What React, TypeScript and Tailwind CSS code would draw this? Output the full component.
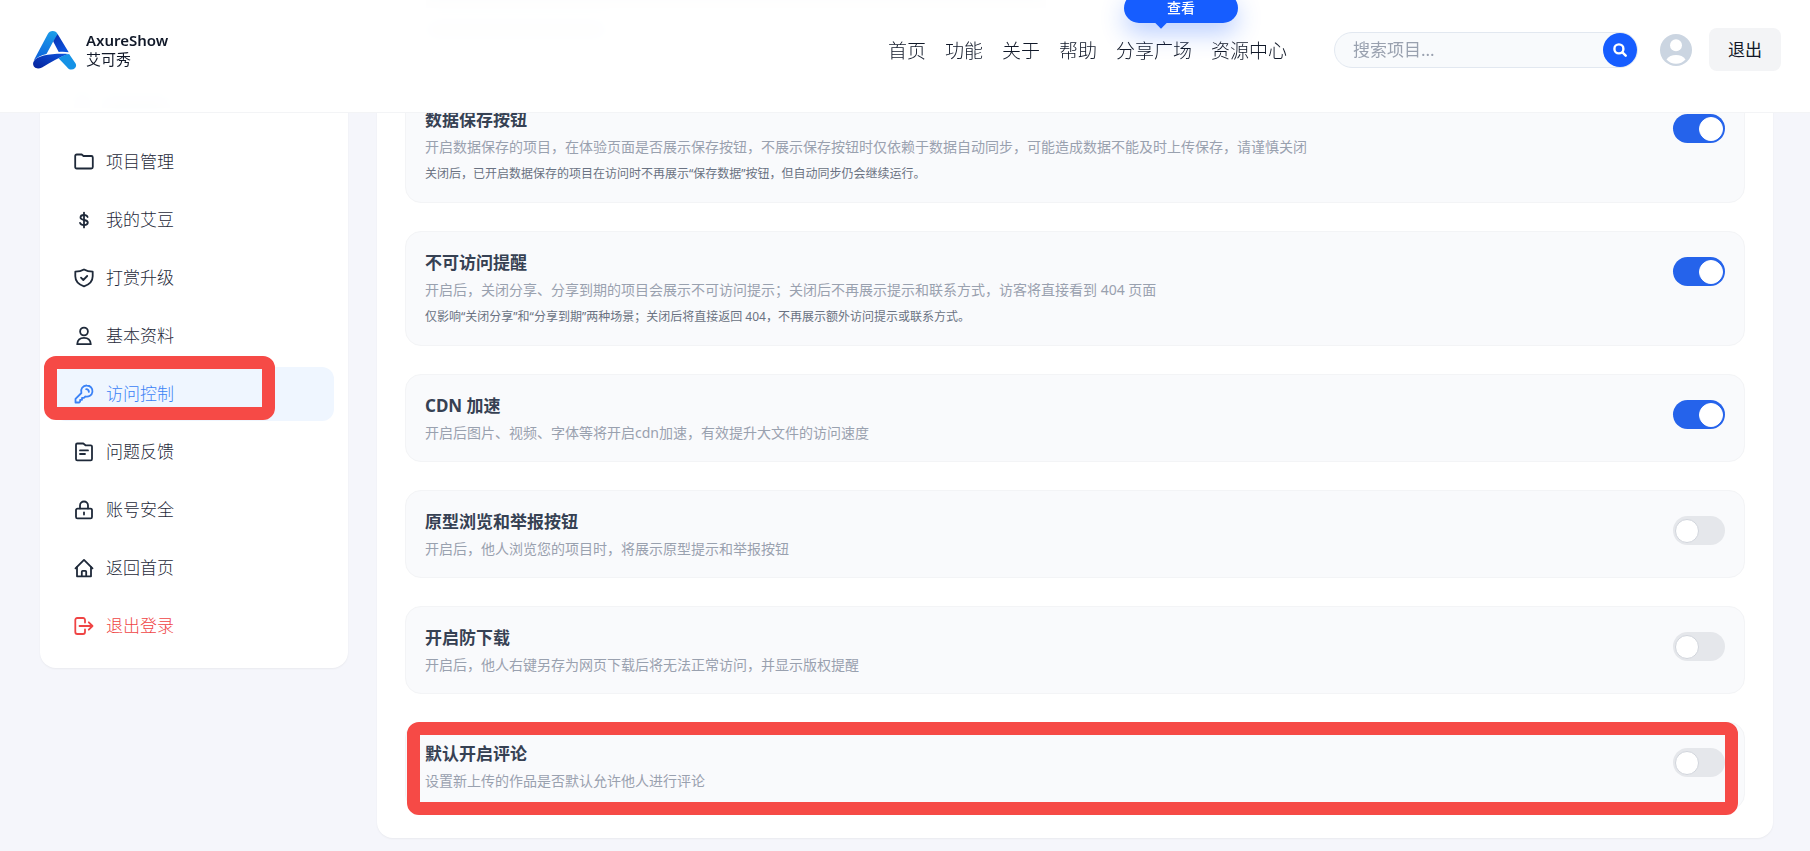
import React from "react";

type IconName =
  | "folder" | "dollar" | "shield" | "user" | "key"
  | "note" | "lock" | "home" | "logout";

const iconShapes: Record<IconName, React.ReactNode> = {
  folder: <path d="M1.200 4c0-.9.600-1.500 1.500-1.500h5l1.800 1.500h7.800c.9 0 1.500.600 1.500 1.500v9.500c0 .9-.600 1.500-1.500 1.500H2.700c-.9 0-1.500-.600-1.500-1.500z" />,
  dollar: (
    <>
      <path d="M10 2.600v14.800" />
      <path d="M13.600 7c-.5-1.300-1.800-2-3.600-2-2 0-3.500.9-3.500 2.500 0 3.500 7.300 1.500 7.300 5.100 0 1.700-1.700 2.500-3.800 2.500s-3.600-.9-4-2.300" />
    </>
  ),
  shield: (
    <>
      <path d="M10 1.500c2.600 1.600 5.500 2.200 8.700 2.200v4.600c0 4.600-3.400 8.300-8.700 10.100-5.300-1.800-8.700-5.500-8.700-10.100V3.700c3.200 0 6.100-.6 8.700-2.200z" />
      <path d="M7 9.700l2.300 2.300 3.900-4" />
    </>
  ),
  user: (
    <>
      <circle cx="10" cy="5.500" r="3.900" />
      <path d="M3.200 18.200c.3-3.900 3-6.300 6.800-6.300s6.500 2.400 6.800 6.300z" />
    </>
  ),
  key: (
    <>
      <path d="M12.900 1.500a5.600 5.600 0 1 1-1.500 11l-1.500 1.400H8v1.900H6.100v1.800l-.8.900H1.500v-3.600l5.900-5.900a5.600 5.600 0 0 1 5.500-7.500z" />
      <path d="M12.200 5.200a2.900 2.900 0 0 1 2.700 2.700" />
    </>
  ),
  note: (
    <>
      <path d="M2 2.800c0-.8.500-1.300 1.300-1.300h6l2.200 1.800h5.200c.8 0 1.300.5 1.300 1.300v12.500c0 .8-.5 1.300-1.300 1.300H3.300c-.8 0-1.300-.5-1.300-1.300z" />
      <path d="M6 8.400h8M6 12h5" />
    </>
  ),
  lock: (
    <>
      <rect x="2" y="8.600" width="16" height="9.800" rx="1.500" />
      <path d="M6 8.400V5.500a4 4 0 0 1 8 0v2.900M10 12.300v2.200" />
    </>
  ),
  home: (
    <>
      <path d="M1.500 10.300L10 1.900l8.500 8.400" />
      <path d="M3 9.200v9.100h14V9.200" />
      <path d="M7.800 18v-4.300c0-.6.300-.9.900-.9h2.600c.6 0 .9.300.9.900V18" />
    </>
  ),
  logout: (
    <>
      <path d="M11 6.500V4c0-1.300-.7-2-2-2H3.300c-1.300 0-2 .7-2 2v12c0 1.300.7 2 2 2H9c1.300 0 2-.7 2-2v-2.500" />
      <path d="M5.500 10h13M14.800 6.300l3.700 3.700-3.700 3.700" />
    </>
  ),
};

function Icon({ name }: { name: IconName }) {
  return (
    <svg
      viewBox="0 0 20 20"
      className="size-5 shrink-0"
      fill="none"
      stroke="currentColor"
      strokeWidth="1.8"
      strokeLinecap="round"
      strokeLinejoin="round"
      aria-hidden="true"
    >
      {iconShapes[name]}
    </svg>
  );
}

function Logo() {
  return (
    <svg viewBox="0 0 44 40" className="h-10 w-11 shrink-0" aria-hidden="true">
      <defs>
        <linearGradient id="logo-left" x1="0.6" y1="0" x2="0.3" y2="1">
          <stop offset="0" stopColor="#1b9be8" />
          <stop offset="1" stopColor="#0d63dd" />
        </linearGradient>
        <linearGradient id="logo-right" x1="0" y1="0" x2="0.6" y2="1">
          <stop offset="0" stopColor="#0a2fae" />
          <stop offset="1" stopColor="#0b52dc" />
        </linearGradient>
        <linearGradient id="logo-swoosh" x1="0" y1="1" x2="1" y2="0">
          <stop offset="0" stopColor="#06219a" />
          <stop offset="1" stopColor="#0d55de" />
        </linearGradient>
      </defs>
      <path d="M14.800 4C15.800 2 17.500 1 19.700 1c2.300 0 4 1.100 4.900 3l-.4 3-4 4.500-6.700 12.500C8.500 25.300 4 27.200.7 30.500z" fill="url(#logo-left)" />
      <path d="M24.600 4L35.700 22.300c-3.500-.6-6.800-.7-10-.3L20.200 11.500z" fill="url(#logo-right)" />
      <path d="M.4 32C3.500 24.800 20 23.200 35.500 23.900 27 26.600 18 32 9 37.400 3.500 40.500-1.200 36.800.4 32z" fill="url(#logo-swoosh)" />
      <path d="M25.500 28.200c3.500-2.200 7-3.700 10.600-4.200l6.500 9.500c1.500 3-.5 6.100-4.200 6.100-1.900 0-3.500-.9-4.500-2.600z" fill="#1592e6" />
    </svg>
  );
}

const navLinks = ["首页", "功能", "关于", "帮助", "分享广场", "资源中心"];

const menu: { icon: IconName; label: string }[] = [
  { icon: "folder", label: "项目管理" },
  { icon: "dollar", label: "我的艾豆" },
  { icon: "shield", label: "打赏升级" },
  { icon: "user", label: "基本资料" },
  { icon: "key", label: "访问控制" },
  { icon: "note", label: "问题反馈" },
  { icon: "lock", label: "账号安全" },
  { icon: "home", label: "返回首页" },
  { icon: "logout", label: "退出登录" },
];

interface Setting {
  id: string;
  title: string;
  desc: string;
  note?: string;
  on: boolean;
  marked?: boolean;
}

const settings: Setting[] = [
  {
    id: "save-button",
    title: "数据保存按钮",
    desc: "开启数据保存的项目，在体验页面是否展示保存按钮，不展示保存按钮时仅依赖于数据自动同步，可能造成数据不能及时上传保存，请谨慎关闭",
    note: "关闭后，已开启数据保存的项目在访问时不再展示“保存数据”按钮，但自动同步仍会继续运行。",
    on: true,
  },
  {
    id: "blocked-notice",
    title: "不可访问提醒",
    desc: "开启后，关闭分享、分享到期的项目会展示不可访问提示；关闭后不再展示提示和联系方式，访客将直接看到 404 页面",
    note: "仅影响“关闭分享”和“分享到期”两种场景；关闭后将直接返回 404，不再展示额外访问提示或联系方式。",
    on: true,
  },
  { id: "cdn", title: "CDN 加速", desc: "开启后图片、视频、字体等将开启cdn加速，有效提升大文件的访问速度", on: true },
  { id: "report", title: "原型浏览和举报按钮", desc: "开启后，他人浏览您的项目时，将展示原型提示和举报按钮", on: false },
  { id: "anti-download", title: "开启防下载", desc: "开启后，他人右键另存为网页下载后将无法正常访问，并显示版权提醒", on: false },
  { id: "comments", title: "默认开启评论", desc: "设置新上传的作品是否默认允许他人进行评论", on: false, marked: true },
];

function Header() {
  return (
    <header className="fixed inset-x-0 top-0 z-20 border-b border-gray-100 bg-white/95 backdrop-blur-sm">
      <div className="flex items-center pt-7 pr-[29px] pb-[41px] pl-[33px]">
        <a href="#" className="flex items-center gap-[9px]">
          <Logo />
          <span className="flex flex-col text-[15px] leading-[19px] text-gray-900">
            <span className="font-semibold">AxureShow</span>
            <span>艾可秀</span>
          </span>
        </a>
        <nav className="mt-[2px] ml-auto flex gap-[19px] text-[19px] leading-7 font-light text-gray-900">
          {navLinks.map((label) => (
            <a key={label} href="#" className="relative">
              {label}
              {label === "分享广场" && (
                <span className="absolute -top-11 left-2 flex h-[30px] w-[114px] items-center justify-center rounded-full bg-[#165dff] text-sm font-medium text-white shadow-[0_10px_25px_rgba(22,93,255,0.3)]">
                  查看
                  <span className="absolute -bottom-1 left-[33px] size-2 rotate-45 bg-[#165dff]" />
                </span>
              )}
            </a>
          ))}
        </nav>
        <form className="ml-[47px] flex h-9 w-[304px] items-center rounded-full border border-slate-200 bg-slate-50">
          <input
            type="text"
            aria-label="搜索项目"
            placeholder="搜索项目..."
            className="min-w-0 flex-1 bg-transparent pl-[18px] text-[17px] text-gray-900 outline-none placeholder:text-gray-400"
          />
          <button type="button" aria-label="搜索" className="flex size-[34px] items-center justify-center rounded-full bg-[#165dff] text-white">
            <svg viewBox="0 0 14 14" className="size-[14px]" fill="none" stroke="currentColor" strokeWidth="2.4" strokeLinecap="round" aria-hidden="true">
              <circle cx="5.900" cy="5.900" r="4.500" />
              <path d="M9.400 9.400l3.300 3.300" />
            </svg>
          </button>
        </form>
        <svg viewBox="0 0 32 32" className="ml-[22px] size-8 shrink-0" aria-hidden="true">
          <circle cx="16" cy="16" r="16" fill="#cbd5e1" />
          <circle cx="16" cy="11.200" r="6" fill="#fff" />
          <path d="M6.500 25.500C8.500 22.300 12 21 16 21s7.500 1.300 9.500 4.500C23 28.300 19.800 29.800 16 29.800S9 28.300 6.500 25.500z" fill="#fff" />
        </svg>
        <button type="button" className="ml-[17px] h-[43px] w-[72px] rounded-lg bg-gray-100 text-[17px] text-gray-900">
          退出
        </button>
      </div>
    </header>
  );
}

function Sidebar() {
  return (
    <aside className="w-[308px] shrink-0 self-start rounded-b-2xl bg-white px-[14px] pb-[15px] shadow-xs">
      <div className="flex h-[135px] items-end gap-3 px-5 pb-[27px]" aria-hidden="true">
        <span className="size-4 bg-slate-300" />
        <span className="h-3 w-[68px] bg-slate-300" />
      </div>
      <nav className="flex flex-col gap-1">
        {menu.map(({ icon, label }) => {
          const active = icon === "key";
          const tone = active ? "bg-[#eff6ff] text-[#3b82f6]" : icon === "logout" ? "text-[#ef4444]" : "text-gray-800";
          return (
            <a
              key={label}
              href="#"
              aria-current={active ? "page" : undefined}
              className={`relative flex h-[54px] items-center gap-3 rounded-xl px-5 text-[17px] font-light ${tone}`}
            >
              <Icon name={icon} />
              {label}
              {active && <span className="absolute -top-[11px] -left-[10px] h-16 w-[231px] rounded-xl border-[13px] border-[#f64a46]" />}
            </a>
          );
        })}
      </nav>
    </aside>
  );
}

function SettingCard({ id, title, desc, note, on, marked }: Setting) {
  return (
    <section className="relative flex items-start justify-between rounded-2xl border border-gray-100 bg-[#f9fafc] px-[19px] pt-[19px] pb-[17px]">
      <div>
        <label htmlFor={id} className="block text-[17px] leading-6 font-bold text-gray-700">{title}</label>
        <p className="mt-1 text-[14px] leading-[22px] text-gray-400">{desc}</p>
        {note && <p className="mt-[5px] text-[12px] leading-[22px] text-gray-500">{note}</p>}
      </div>
      <input
        id={id}
        type="checkbox"
        defaultChecked={on}
        className="relative mt-[6px] h-[29px] w-[52px] shrink-0 appearance-none rounded-full bg-gray-200 before:absolute before:top-[3px] before:left-[2px] before:size-6 before:rounded-full before:border before:border-gray-300 before:bg-white checked:bg-[#2563eb] checked:before:left-[26px] checked:before:border-white"
      />
      {marked && <span className="pointer-events-none absolute -top-px right-[6px] -bottom-[6px] left-px rounded-xl border-[13px] border-[#f64a46]" />}
    </section>
  );
}

export default function App() {
  return (
    <div className="min-h-screen bg-[#f5f6fb] font-['Noto_Sans','Noto_Sans_CJK_SC',sans-serif]">
      <Header />
      <div className="flex gap-[29px] pr-[37px] pb-3 pl-10">
        <Sidebar />
        <main className="flex min-w-0 flex-1 flex-col gap-7 rounded-b-2xl bg-white px-7 pb-7 shadow-xs">
          <div className="h-[60px] rounded-b-2xl border border-t-0 border-gray-100 bg-[#f9fafc] px-5" aria-hidden="true">
            <div className="h-2 w-[620px] bg-gray-300" />
            <div className="mt-4 h-3 w-[180px] bg-gray-300" />
          </div>
          {settings.map((s) => (
            <SettingCard key={s.id} {...s} />
          ))}
        </main>
      </div>
    </div>
  );
}
